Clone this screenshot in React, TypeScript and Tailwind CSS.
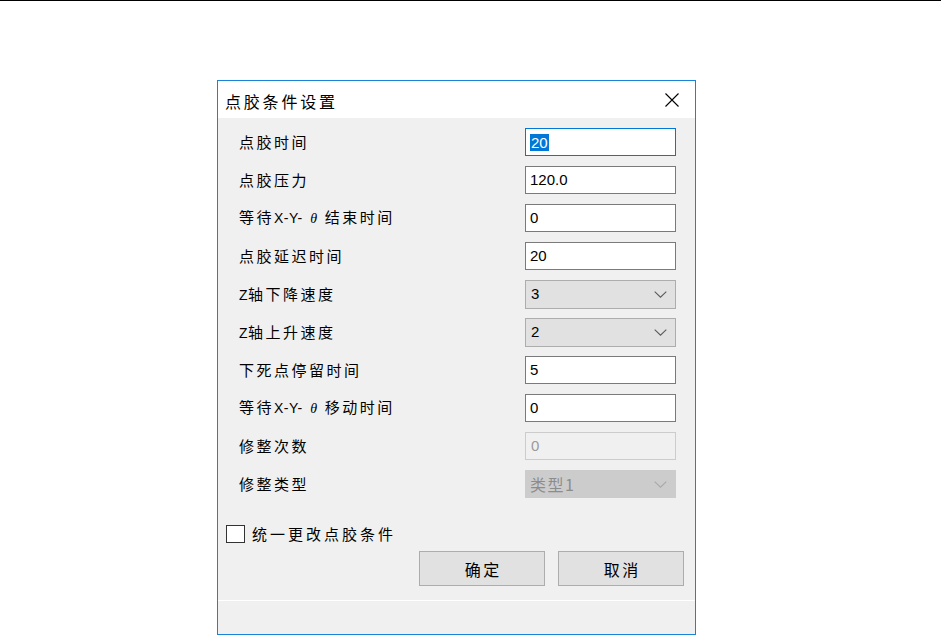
import React from "react";

type Row = {
  label: string;
  kind: "input" | "select" | "disabledInput" | "disabledSelect";
  value: string;
  focused?: boolean;
};

const rows: Row[] = [
  { label: "点胶时间", kind: "input", value: "20", focused: true },
  { label: "点胶压力", kind: "input", value: "120.0" },
  { label: "等待X-Y-θ结束时间", kind: "input", value: "0" },
  { label: "点胶延迟时间", kind: "input", value: "20" },
  { label: "Z轴下降速度", kind: "select", value: "3" },
  { label: "Z轴上升速度", kind: "select", value: "2" },
  { label: "下死点停留时间", kind: "input", value: "5" },
  { label: "等待X-Y-θ移动时间", kind: "input", value: "0" },
  { label: "修整次数", kind: "disabledInput", value: "0" },
  { label: "修整类型", kind: "disabledSelect", value: "类型1" },
];

function Label({ text }: { text: string }) {
  const parts = text.split(/([A-Za-z\-]+|θ)/).filter((p) => p.length > 0);
  return (
    <span className="text-[15px] leading-[20px] tracking-[2.5px] text-black whitespace-nowrap">
      {parts.map((p, i) => {
        if (p === "θ")
          return (
            <span key={i} className="inline-block w-[22px] text-center tracking-normal font-['Liberation_Serif',serif] italic text-[14px]">
              θ
            </span>
          );
        if (/^[A-Za-z\-]+$/.test(p))
          return (
            <span key={i} className="tracking-[0.5px] font-['Liberation_Sans',sans-serif] text-[14px]">
              {p}
            </span>
          );
        return <span key={i}>{p}</span>;
      })}
    </span>
  );
}

function Chevron({ color }: { color: string }) {
  return (
    <svg width="13" height="7" viewBox="0 0 13 7" fill="none">
      <path d="M0.7 0.7 L6.5 6.2 L12.3 0.7" stroke={color} strokeWidth="1.1" />
    </svg>
  );
}

function Control({ row }: { row: Row }) {
  const num = "font-['Liberation_Sans','Noto_Sans_CJK_SC',sans-serif] text-[15px]";
  if (row.kind === "input") {
    return (
      <div
        className={`w-[151px] h-[28px] border bg-white flex items-center pl-[4px] ${num} ${
          row.focused ? "border-[#0078d7]" : "border-[#7a7a7a]"
        } text-black`}
      >
        {row.focused ? (
          <span className="bg-[#0078d7] text-white h-[17px] leading-[17px] px-[1px]">{row.value}</span>
        ) : (
          <span>{row.value}</span>
        )}
      </div>
    );
  }
  if (row.kind === "select") {
    return (
      <div className={`w-[151px] h-[29px] border border-[#adadad] bg-[#e1e1e1] flex items-center justify-between pl-[5px] pr-[8px] ${num} text-black`}>
        <span>{row.value}</span>
        <Chevron color="#5a5a5a" />
      </div>
    );
  }
  if (row.kind === "disabledInput") {
    return (
      <div className={`w-[151px] h-[28px] border border-[#cccccc] bg-[#f0f0f0] flex items-center pl-[5px] ${num} text-[#9a9a9a]`}>
        <span>{row.value}</span>
      </div>
    );
  }
  return (
    <div className="w-[151px] h-[28px] border border-[#cccccc] bg-[#cccccc] flex items-center justify-between pl-[4px] pr-[8px] text-[#8c8c8c]">
      <span className="text-[16px] tracking-[1.5px] font-['Noto_Sans_CJK_SC',sans-serif]">{row.value}</span>
      <Chevron color="#a9a9a9" />
    </div>
  );
}

export default function App() {
  return (
    <div className="w-[941px] h-[635px] bg-white overflow-hidden font-['Noto_Sans_CJK_SC',sans-serif]">
      <div className="h-px bg-black" />
      <div className="pt-[79px] pl-[217px]">
        <div className="w-[479px] h-[555px] border border-[#1883d7] flex flex-col bg-[#f0f0f0]">
          {/* title bar */}
          <div className="h-[37px] bg-white flex items-center justify-between pl-[7px] pr-[16px] shrink-0">
            <span className="text-[16px] tracking-[2.8px] text-black leading-[20px] pt-[3px]">点胶条件设置</span>
            <svg width="14" height="14" viewBox="0 0 14 14" fill="none">
              <path d="M0.5 0.5 L13.5 13.5 M13.5 0.5 L0.5 13.5" stroke="#000" strokeWidth="1.1" />
            </svg>
          </div>

          {/* content */}
          <div className="flex-1 flex flex-col">
            <div className="pt-[10px] flex flex-col gap-[10px]">
              {rows.map((r, i) => (
                <div key={i} className="h-[28px] flex items-center justify-between pl-[21px] pr-[19px]">
                  <Label text={r.label} />
                  <Control row={r} />
                </div>
              ))}
            </div>

            <div className="mt-[27px] h-[18px] pl-[8px] flex items-center gap-[7px]">
              <div className="w-[19px] h-[18px] border border-[#333333] bg-white" />
              <span className="text-[15px] leading-[20px] tracking-[3px] text-black">统一更改点胶条件</span>
            </div>

            <div className="mt-[8px] flex justify-end gap-[13px] pr-[11px]">
              <div className="w-[126px] h-[35px] border border-[#adadad] bg-[#e1e1e1] flex items-center justify-center text-[16px] tracking-[2.5px] pl-[2.5px] text-black">
                确定
              </div>
              <div className="w-[126px] h-[35px] border border-[#adadad] bg-[#e1e1e1] flex items-center justify-center text-[16px] tracking-[2.5px] pl-[2.5px] text-black">
                取消
              </div>
            </div>
          </div>

          {/* status strip */}
          <div className="h-px bg-white shrink-0" />
          <div className="h-[33px] bg-[#f0f0f0] shrink-0" />
        </div>
      </div>
    </div>
  );
}
